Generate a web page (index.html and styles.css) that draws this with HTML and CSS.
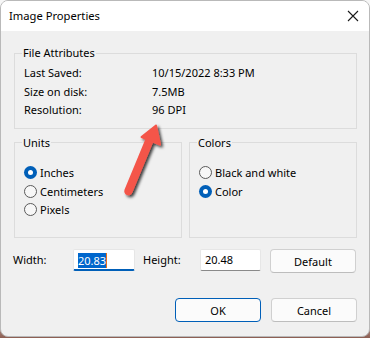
FILE: index.html
```html
<!DOCTYPE html>
<html lang="en">
<head>
    <meta charset="UTF-8">
    <title>Image Properties</title>
    <link rel="stylesheet" href="styles.css">
</head>
<body>
    <div class="window">
        <div class="titlebar">
            <span class="title">Image Properties</span>
            <svg class="close" width="12" height="12" viewBox="0 0 12 12">
                <path d="M1 1 L11 11 M11 1 L1 11" stroke="#1a1a1a" stroke-width="1.1" fill="none"/>
            </svg>
        </div>
        <div class="content">
            <fieldset class="group">
                <legend>File Attributes</legend>
                <div class="attrs">
                    <span>Last Saved:</span><span>10/15/2022 8:33 PM</span>
                    <span>Size on disk:</span><span>7.5MB</span>
                    <span>Resolution:</span><span>96 DPI</span>
                </div>
            </fieldset>

            <div class="groups">
                <fieldset class="group options">
                    <legend>Units</legend>
                    <div class="radio"><span class="dot checked"></span>Inches</div>
                    <div class="radio"><span class="dot"></span>Centimeters</div>
                    <div class="radio"><span class="dot"></span>Pixels</div>
                </fieldset>
                <fieldset class="group options">
                    <legend>Colors</legend>
                    <div class="radio"><span class="dot"></span>Black and white</div>
                    <div class="radio"><span class="dot checked"></span>Color</div>
                </fieldset>
            </div>

            <div class="size-row">
                <span class="label width-label">Width:</span>
                <div class="field focused"><span class="selected">20.83</span><span class="caret"></span></div>
                <span class="label height-label">Height:</span>
                <div class="field height-field">20.48</div>
                <button class="button">Default</button>
            </div>

            <div class="actions">
                <button class="button primary">OK</button>
                <button class="button">Cancel</button>
            </div>
        </div>
    </div>

    <!-- red callout arrow over the dialog -->
    <svg class="arrow" width="370" height="338" viewBox="0 0 370 338">
        <defs>
            <filter id="shadow" x="-50%" y="-50%" width="200%" height="200%">
                <feDropShadow dx="2" dy="2" stdDeviation="1.4" flood-color="#000" flood-opacity="0.75"/>
            </filter>
        </defs>
        <g filter="url(#shadow)" fill="#f4554a" stroke="#f4554a">
            <line x1="150" y1="139" x2="128.5" y2="191" stroke-width="8.5" stroke-linecap="round"/>
            <polygon points="156,125.5 141.5,137 160,144.5" stroke-width="2" stroke-linejoin="round"/>
        </g>
    </svg>
</body>
</html>
```

FILE: styles.css
```css
body {
    margin: 0;
    width: 370px;
    height: 338px;
    overflow: hidden;
    position: relative;
    font-family: "Segoe UI", "Noto Sans", sans-serif;
    font-size: 11px;
    color: #000000;
    background: linear-gradient(#f6f6f6 90%, #8c5e52);
}

.window {
    box-sizing: border-box;
    width: 370px;
    height: 337px;
    border: 1px solid #b9b9b9;
    border-radius: 8px;
    background-color: #f0f0f0;
    overflow: hidden;
    display: flex;
    flex-direction: column;
}

.titlebar {
    height: 30px;
    flex: 0 0 auto;
    background-color: #ffffff;
    display: flex;
    align-items: center;
    justify-content: space-between;
    padding: 0 10px 0 8px;
}

.title {
    line-height: 16px;
    font-size: 11.2px;
}

.close {
    display: block;
}

.content {
    padding: 14px 12px 0 13px;
    display: flex;
    flex-direction: column;
}

.group {
    margin: 0;
    border: 1px solid #dcdcdc;
    padding: 3px 9px 8px 9px;
    min-width: 0;
}

.group legend {
    padding: 0 1px;
    margin-left: -2px;
    line-height: 16px;
}

.attrs {
    display: grid;
    grid-template-columns: 128px auto;
    line-height: 18.5px;
}

.groups {
    margin-top: 6px;
    display: grid;
    grid-template-columns: 1fr 1fr;
    gap: 7px;
}

.options {
    padding-top: 13px;
    padding-bottom: 18px;
}

.radio {
    display: flex;
    align-items: center;
    height: 18.5px;
    gap: 3px;
}

.dot {
    box-sizing: border-box;
    width: 13px;
    height: 13px;
    border: 1px solid #5a5a5a;
    border-radius: 50%;
    background-color: #f7f7f7;
    display: flex;
    align-items: center;
    justify-content: center;
}

.dot.checked {
    border: none;
    background-color: #005fb8;
}

.dot.checked::after {
    content: "";
    width: 5px;
    height: 5px;
    border-radius: 50%;
    background-color: #ffffff;
}

.size-row {
    margin-top: 11px;
    margin-left: -1px;
    display: flex;
    align-items: flex-start;
}

.label {
    line-height: 22px;
}

.width-label {
    width: 60px;
}

.height-label {
    width: 57px;
    margin-left: 8px;
}

.field {
    box-sizing: border-box;
    height: 22px;
    background-color: #ffffff;
    border: 1px solid #e6e6e6;
    border-bottom-color: #8a8a8a;
    border-radius: 2px;
    padding: 0 4px;
    line-height: 20px;
    display: flex;
    align-items: center;
}

.field.focused {
    width: 62px;
    border-bottom: 2px solid #005fb8;
    padding-top: 1px;
}

.height-field {
    width: 61px;
}

.selected {
    background-color: #0066cc;
    color: #ffffff;
    line-height: 15px;
}

.caret {
    width: 1px;
    height: 15px;
    background-color: #e8701a;
}

.button {
    box-sizing: border-box;
    width: 86px;
    height: 24px;
    margin-left: 9px;
    font-family: inherit;
    font-size: 11px;
    color: #000000;
    background-color: #fbfbfb;
    border: 1px solid #d0d0d0;
    border-bottom-color: #bdbdbd;
    border-radius: 4px;
    padding: 0;
}

.actions {
    margin-top: 25px;
    display: flex;
    justify-content: flex-end;
    gap: 10px;
}

.actions .button {
    margin-left: 0;
}

.button.primary {
    border: 1px solid #005fb8;
}

.arrow {
    position: absolute;
    left: 0;
    top: 0;
    pointer-events: none;
}
```
